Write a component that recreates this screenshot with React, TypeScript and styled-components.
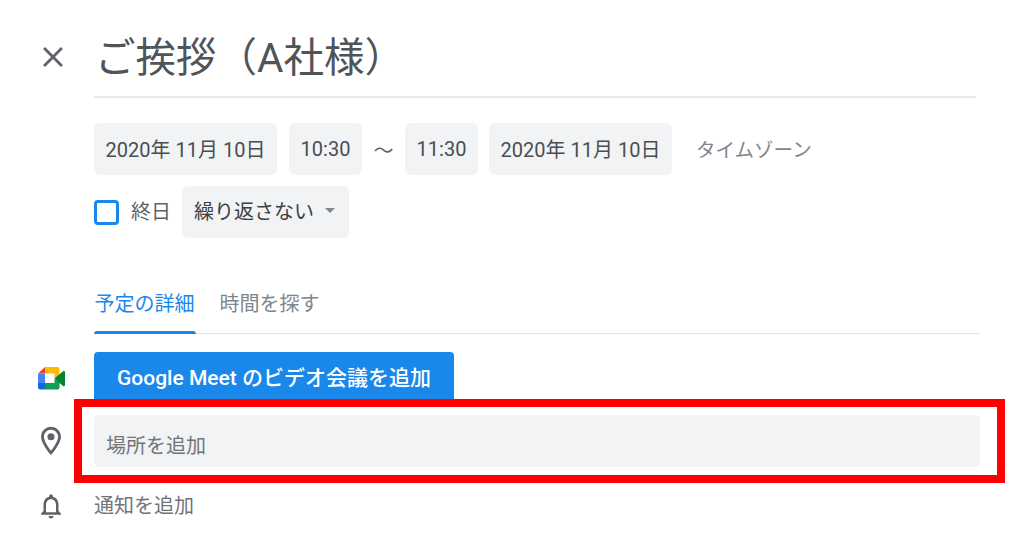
import React from "react";
import styled, { createGlobalStyle } from "styled-components";

const GlobalStyle = createGlobalStyle`
  html, body {
    margin: 0;
    padding: 0;
    background: #ffffff;
  }
  * {
    box-sizing: border-box;
  }
`;

const Page = styled.div`
  width: 1024px;
  height: 538px;
  overflow: hidden;
  background: #ffffff;
  font-family: Roboto, "Noto Sans CJK JP", sans-serif;
  color: #3c4043;
`;

const Row = styled.div<{ $top?: number }>`
  display: flex;
  align-items: center;
  margin-top: ${(p) => p.$top ?? 0}px;
`;

const IconCell = styled.div`
  width: 94px;
  flex: none;
  display: flex;
  justify-content: center;
  padding-left: 8px;
  color: #5f6368;
  line-height: 0;
`;

const CloseCell = styled(IconCell)`
  align-self: flex-start;
  padding-top: 40px;
  padding-left: 12px;
`;

const TitleBox = styled.div`
  width: 882px;
  height: 98px;
  padding: 30px 0 0 1px;
  border-bottom: 2px solid #e6e8ec;
  font-size: 40.5px;
  line-height: 56px;
  color: #4f5458;
  white-space: nowrap;
`;

const Content = styled.div`
  margin-left: 94px;
`;

const ChipRow = styled.div<{ $top: number }>`
  display: flex;
  align-items: center;
  margin-top: ${(p) => p.$top}px;
`;

const Chip = styled.div<{ $width: number; $gap?: number }>`
  width: ${(p) => p.$width}px;
  height: 52px;
  margin-right: ${(p) => p.$gap ?? 0}px;
  padding-bottom: 2px;
  display: flex;
  align-items: center;
  justify-content: center;
  background: #f2f3f5;
  border-radius: 6px;
  font-size: 20px;
  color: #4a4e52;
  white-space: nowrap;
`;

const TimeChip = styled(Chip)`
  padding-bottom: 0;
`;

const Tilde = styled.div`
  width: 43px;
  text-align: center;
  font-size: 20px;
  color: #5f6368;
`;

const PlainText = styled.div`
  margin-left: 24px;
  padding-bottom: 2px;
  font-size: 19.5px;
  color: #80868b;
  white-space: nowrap;
`;

const CheckBox = styled.div`
  width: 25px;
  height: 25px;
  border: 3px solid #1a87ee;
  border-radius: 4px;
`;

const CheckLabel = styled.div`
  margin-left: 12px;
  margin-right: 11px;
  padding-bottom: 4px;
  font-size: 20px;
  color: #5f6368;
`;

const SelectChip = styled(Chip)`
  justify-content: flex-start;
  padding-left: 12px;
  padding-bottom: 4px;
  color: #3c4043;
`;

const Caret = styled.div`
  margin-left: 11px;
  width: 0;
  height: 0;
  border-left: 5.5px solid transparent;
  border-right: 5.5px solid transparent;
  border-top: 5.5px solid #80868b;
`;

const Tabs = styled.div`
  display: flex;
  width: 886px;
  height: 60px;
  margin-top: 36px;
  border-bottom: 1px solid #e0e2e6;
`;

const Tab = styled.div<{ $active?: boolean; $gap?: number }>`
  position: relative;
  width: 102px;
  height: 60px;
  margin-right: ${(p) => p.$gap ?? 0}px;
  padding: 16px 1px 0 0;
  text-align: center;
  font-size: 20px;
  line-height: 28px;
  color: ${(p) => (p.$active ? "#1a87ee" : "#80868b")};

  ${(p) =>
    p.$active &&
    `
    &::after {
      content: "";
      position: absolute;
      left: 0;
      right: 0;
      bottom: 0;
      height: 3px;
      border-radius: 3px 3px 0 0;
      background: #1a87ee;
    }
  `}
`;

const MeetButton = styled.div`
  width: 360px;
  height: 53px;
  padding-bottom: 6px;
  display: flex;
  align-items: center;
  justify-content: center;
  background: #1a87ea;
  border-radius: 4px;
  color: #ffffff;
  font-size: 21px;
  font-weight: 500;
  white-space: nowrap;
`;

const Field = styled.div`
  position: relative;
  width: 886px;
  height: 52px;
  padding: 7px 0 0 12px;
  display: flex;
  align-items: center;
  background: #f2f3f5;
  border-radius: 5px;
  font-size: 20px;
  color: #70757a;
`;

const Highlight = styled.div`
  position: absolute;
  left: -20px;
  top: -16px;
  width: 931px;
  height: 84px;
  border: 8px solid #ff0000;
  pointer-events: none;
`;

const NotifyText = styled.div`
  padding-top: 1px;
  font-size: 20px;
  line-height: 36px;
  color: #70757a;
`;

const CloseIcon = () => (
  <svg width="34" height="34" viewBox="0 0 24 24" fill="currentColor">
    <path d="M19 6.41 17.59 5 12 10.59 6.41 5 5 6.41 10.59 12 5 17.59 6.41 19 12 13.41 17.59 19 19 17.59 13.41 12z" />
  </svg>
);

const MeetIcon = () => (
  <svg width="27" height="23" viewBox="0 0 27 23">
    <path d="M7 0 0 6.5h7z" fill="#ea4335" />
    <path d="M0 6.5V16h7V6.5z" fill="#4285f4" />
    <path d="M0 16v4.5C0 21.6.9 22.5 2 22.5h5V16z" fill="#1967d2" />
    <path d="M7 0v6.5h9.5v4.7l5-4V2c0-1.1-.9-2-2-2z" fill="#fbbc04" />
    <path d="M7 16v6.5h12.5c1.1 0 2-.9 2-2v-5l-5-4V16z" fill="#0f9d58" />
    <path d="M16.5 11.2l5-4 3.6-3c.8-.6 1.9 0 1.9.9v13c0 1-1.1 1.5-1.9.9l-3.6-3z" fill="#00832d" />
  </svg>
);

const PinIcon = () => (
  <svg width="34" height="34" viewBox="0 0 24 24" fill="currentColor">
    <path d="M12 2C8.13 2 5 5.13 5 9c0 5.25 7 13 7 13s7-7.75 7-13c0-3.87-3.13-7-7-7zM7 9c0-2.76 2.24-5 5-5s5 2.24 5 5c0 2.88-2.88 7.19-5 9.88C9.92 16.21 7 11.85 7 9z" />
    <circle cx="12" cy="9" r="2.5" />
  </svg>
);

const BellIcon = () => (
  <svg width="30" height="30" viewBox="0 0 24 24" fill="currentColor">
    <path d="M12 22c1.1 0 2-.9 2-2h-4c0 1.1.9 2 2 2zm6-6v-5c0-3.07-1.63-5.64-4.5-6.32V4c0-.83-.67-1.5-1.5-1.5s-1.5.67-1.5 1.5v.68C7.64 5.36 6 7.92 6 11v5l-2 2v1h16v-1l-2-2zm-2 1H8v-6c0-2.48 1.51-4.5 4-4.5s4 2.02 4 4.5v6z" />
  </svg>
);

const App: React.FC = () => {
  return (
    <Page>
      <GlobalStyle />

      {/* TITLE */}
      <Row>
        <CloseCell>
          <CloseIcon />
        </CloseCell>
        <TitleBox>ご挨拶（A社様）</TitleBox>
      </Row>

      {/* DATE AND TIME */}
      <Content>
        <ChipRow $top={25}>
          <Chip $width={183} $gap={12}>2020年 11月 10日</Chip>
          <TimeChip $width={73}>10:30</TimeChip>
          <Tilde>〜</Tilde>
          <TimeChip $width={73} $gap={11}>11:30</TimeChip>
          <Chip $width={183}>2020年 11月 10日</Chip>
          <PlainText>タイムゾーン</PlainText>
        </ChipRow>
        <ChipRow $top={11}>
          <CheckBox />
          <CheckLabel>終日</CheckLabel>
          <SelectChip $width={167}>
            繰り返さない
            <Caret />
          </SelectChip>
        </ChipRow>

        {/* TABS */}
        <Tabs>
          <Tab $active $gap={23}>予定の詳細</Tab>
          <Tab>時間を探す</Tab>
        </Tabs>
      </Content>

      {/* MEET */}
      <Row $top={18}>
        <IconCell>
          <MeetIcon />
        </IconCell>
        <MeetButton>Google Meet のビデオ会議を追加</MeetButton>
      </Row>

      {/* LOCATION */}
      <Row $top={10}>
        <IconCell>
          <PinIcon />
        </IconCell>
        <Field>
          場所を追加
          <Highlight />
        </Field>
      </Row>

      {/* NOTIFICATION */}
      <Row $top={20}>
        <IconCell>
          <BellIcon />
        </IconCell>
        <NotifyText>通知を追加</NotifyText>
      </Row>
    </Page>
  );
};

export default App;
